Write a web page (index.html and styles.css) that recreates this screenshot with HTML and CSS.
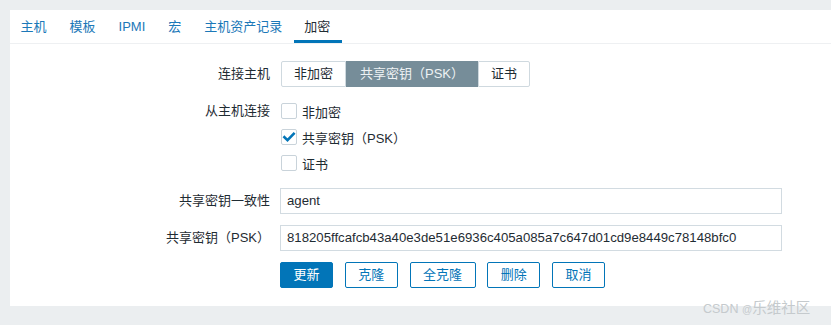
FILE: index.html
```html
<!DOCTYPE html>
<html lang="zh">
<head>
<meta charset="utf-8">
<title>加密</title>
<link rel="stylesheet" href="styles.css">
</head>
<body>
<div class="panel">
  <ul class="tabs">
    <li class="tab">主机</li>
    <li class="tab">模板</li>
    <li class="tab">IPMI</li>
    <li class="tab">宏</li>
    <li class="tab">主机资产记录</li>
    <li class="tab active">加密</li>
  </ul>
  <div class="form">
    <div class="label">连接主机</div>
    <div class="control">
      <div class="segmented">
        <span class="seg">非加密</span>
        <span class="seg on">共享密钥（PSK）</span>
        <span class="seg">证书</span>
      </div>
    </div>

    <div class="label top">从主机连接</div>
    <ul class="checks control">
      <li class="check"><span class="box"></span><span>非加密</span></li>
      <li class="check"><span class="box"><svg viewBox="0 0 16 16" width="16" height="16"><path d="M3.4 8.1 L6.5 11.1 L12.7 4.8" fill="none" stroke="#0275b8" stroke-width="2.6" stroke-linecap="square"/></svg></span><span>共享密钥（PSK）</span></li>
      <li class="check"><span class="box"></span><span>证书</span></li>
    </ul>

    <div class="label">共享密钥一致性</div>
    <div class="control"><div class="input">agent</div></div>

    <div class="label">共享密钥（PSK）</div>
    <div class="control"><div class="input">818205ffcafcb43a40e3de51e6936c405a085a7c647d01cd9e8449c78148bfc0</div></div>

    <div class="label"></div>
    <div class="control buttons">
      <span class="btn primary">更新</span>
      <span class="btn">克隆</span>
      <span class="btn">全克隆</span>
      <span class="btn">删除</span>
      <span class="btn">取消</span>
    </div>
  </div>
</div>
<div class="watermark"><span class="wm-latin">CSDN</span> <span class="wm-at">@</span><span class="wm-cjk">乐维社区</span></div>
</body>
</html>
```
FILE: styles.css
```css
html, body {
  margin: 0;
  padding: 0;
}
body {
  background: #ebeef0;
  font-family: "Liberation Sans", Arial, "Noto Sans CJK SC", sans-serif;
  font-size: 13px;
  color: #1f2c33;
  width: 831px;
  height: 325px;
  overflow: hidden;
  position: relative;
}
.panel {
  margin: 10px 0 0 10px;
  background: #ffffff;
  height: 296px;
  box-sizing: border-box;
}
.tabs {
  list-style: none;
  margin: 0;
  padding: 0;
  display: flex;
  height: 34px;
  border-bottom: 1px solid #eef0f2;
  box-sizing: border-box;
}
.tab {
  padding: 0 11.5px;
  line-height: 33px;
  height: 33px;
  color: #1b78b8;
  box-sizing: border-box;
}
.tab:first-child {
  padding-left: 10.5px;
}
.tab.active {
  color: #1f2c33;
  border-bottom: 3px solid #0275b8;
  padding-left: 10.5px;
  padding-right: 11.5px;
}
.form {
  display: grid;
  grid-template-columns: 260px 1fr;
  column-gap: 10px;
  row-gap: 11px;
  padding-top: 17px;
  padding-right: 49px;
}
.label {
  text-align: right;
  line-height: 26px;
  align-self: center;
}
.label.top {
  align-self: start;
}
.control {
  display: flex;
  align-items: center;
  min-height: 26px;
}
.segmented {
  display: flex;
  margin-left: 1px;
}
.seg {
  height: 26px;
  line-height: 24px;
  padding: 0 12px;
  border: 1px solid #cfd9df;
  box-sizing: border-box;
  background: #ffffff;
}
.seg:first-child {
  border-radius: 2px 0 0 2px;
}
.seg:last-child {
  border-radius: 0 2px 2px 0;
}
.seg.on {
  background: #768d99;
  border-color: #768d99;
  color: #eef2f4;
  padding: 0 13px;
}
.checks {
  list-style: none;
  margin: 0;
  padding: 0 0 1px 0;
  display: flex;
  flex-direction: column;
  align-items: flex-start;
}
.check {
  display: flex;
  align-items: center;
  height: 26px;
  gap: 5px;
}
.box {
  width: 16px;
  height: 16px;
  margin-left: 1px;
  border: 1px solid #c9d3da;
  border-radius: 2px;
  box-sizing: border-box;
  display: flex;
  align-items: center;
  justify-content: center;
  background: #fff;
}
.box svg {
  display: block;
  flex: none;
}
.input {
  width: 100%;
  height: 26px;
  line-height: 24px;
  border: 1px solid #d2dbe1;
  box-sizing: border-box;
  padding: 0 6px;
  white-space: nowrap;
  overflow: hidden;
  font-size: 13.2px;
}
.buttons {
  gap: 11.75px;
}
.btn {
  height: 26px;
  line-height: 24px;
  padding: 0 12.5px;
  border: 1px solid #0275b8;
  border-radius: 2px;
  box-sizing: border-box;
  color: #0275b8;
  background: #ffffff;
}
.btn.primary {
  background: #0275b8;
  color: #ffffff;
}
.watermark {
  position: absolute;
  left: 703px;
  top: 299px;
  line-height: 18px;
  color: #c5cacd;
  white-space: nowrap;
}
.wm-latin {
  font-size: 12.5px;
}
.wm-at {
  font-size: 10px;
}
.wm-cjk {
  font-size: 14.5px;
}
```
